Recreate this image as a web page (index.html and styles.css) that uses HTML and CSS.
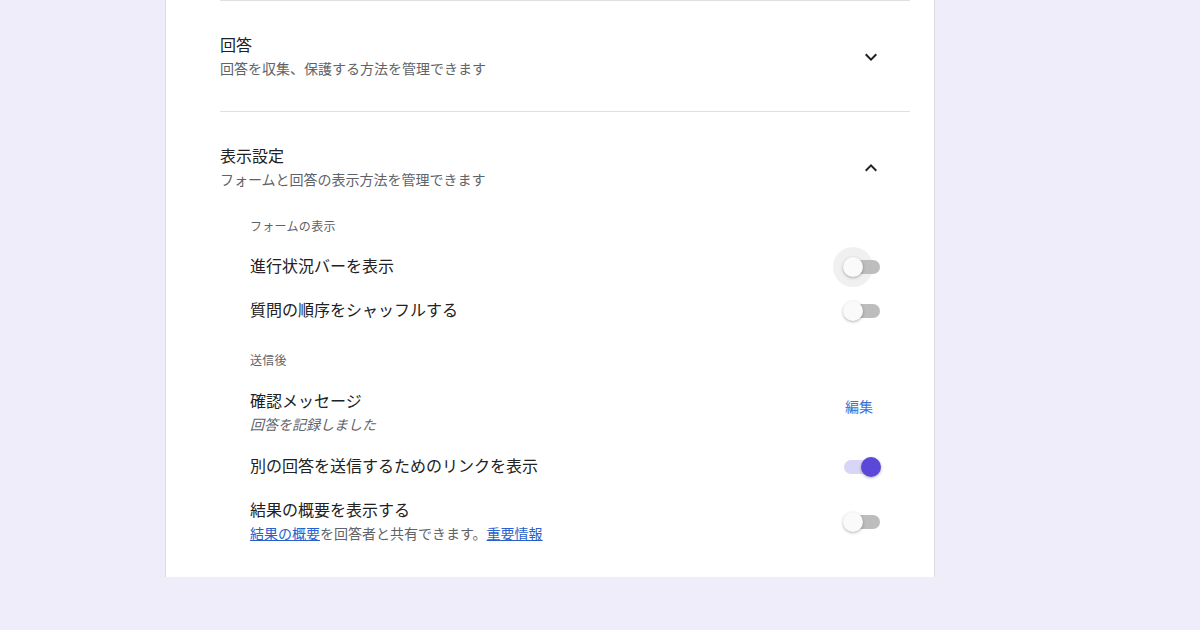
FILE: index.html
```html
<!DOCTYPE html>
<html lang="ja">
<head>
  <meta charset="utf-8">
  <link rel="stylesheet" href="styles.css">
</head>
<body>
  <div class="settings-card">
    <section class="settings-section">
      <div class="section-header">
        <div class="section-text">
          <div class="section-title">回答</div>
          <div class="section-desc">回答を収集、保護する方法を管理できます</div>
        </div>
        <button class="expand-button" aria-label="展開">
          <svg width="24" height="24" viewBox="0 0 24 24" fill="currentColor">
            <path d="M16.59 8.59L12 13.17 7.41 8.59 6 10l6 6 6-6z"></path>
          </svg>
        </button>
      </div>
    </section>

    <section class="settings-section open">
      <div class="section-header">
        <div class="section-text">
          <div class="section-title">表示設定</div>
          <div class="section-desc">フォームと回答の表示方法を管理できます</div>
        </div>
        <button class="expand-button" aria-label="折りたたむ">
          <svg width="24" height="24" viewBox="0 0 24 24" fill="currentColor">
            <path d="M12 8l-6 6 1.41 1.41L12 10.83l4.59 4.58L18 14z"></path>
          </svg>
        </button>
      </div>

      <div class="sub-group">
        <div class="group-label">フォームの表示</div>
        <div class="setting-row">
          <div class="row-title">進行状況バーを表示</div>
          <div class="toggle hovered"><span class="halo"></span><span class="track"></span><span class="knob"></span></div>
        </div>
        <div class="setting-row">
          <div class="row-title">質問の順序をシャッフルする</div>
          <div class="toggle"><span class="track"></span><span class="knob"></span></div>
        </div>
      </div>

      <div class="sub-group">
        <div class="group-label">送信後</div>
        <div class="setting-row">
          <div class="row-text">
            <div class="row-title">確認メッセージ</div>
            <div class="row-desc italic">回答を記録しました</div>
          </div>
          <button class="text-button">編集</button>
        </div>
        <div class="setting-row">
          <div class="row-title">別の回答を送信するためのリンクを表示</div>
          <div class="toggle on"><span class="track"></span><span class="knob"></span></div>
        </div>
        <div class="setting-row">
          <div class="row-text">
            <div class="row-title">結果の概要を表示する</div>
            <div class="row-desc"><a href="#">結果の概要</a>を回答者と共有できます。<a href="#">重要情報</a></div>
          </div>
          <div class="toggle"><span class="track"></span><span class="knob"></span></div>
        </div>
      </div>
    </section>
  </div>
</body>
</html>
```

FILE: styles.css
```css
body {
  margin: 0;
  background-color: #efedfa;
  font-family: Roboto, "Noto Sans CJK JP", sans-serif;
  color: #202124;
}

.settings-card {
  box-sizing: border-box;
  width: 770px;
  margin-left: 165px;
  padding: 0 24px 23px 54px;
  background-color: #fff;
  border-left: 1px solid #dadce0;
  border-right: 1px solid #dadce0;
}

.settings-section {
  border-top: 1px solid #e0e0e0;
  padding: 33px 0 32px;
}

.settings-section.open {
  padding-bottom: 0;
}

.section-header {
  display: flex;
  align-items: center;
  justify-content: space-between;
}

.section-title {
  font-size: 16px;
  line-height: 24px;
}

.section-desc {
  font-size: 14px;
  line-height: 20px;
  margin-top: 1px;
  color: #5f6368;
}

.expand-button {
  width: 40px;
  height: 40px;
  margin-right: 19px;
  padding: 0;
  border: none;
  background: none;
  color: #202124;
  display: flex;
  align-items: center;
  justify-content: center;
  cursor: pointer;
}

.sub-group {
  padding: 0 29px 0 30px;
}

.section-header + .sub-group {
  margin-top: 29px;
}

.sub-group + .sub-group {
  margin-top: 20px;
}

.group-label {
  font-size: 12px;
  line-height: 16px;
  letter-spacing: 0.3px;
  color: #5f6368;
  margin-bottom: 10px;
}

.setting-row {
  display: flex;
  align-items: center;
  justify-content: space-between;
  padding: 10px 0;
}

.row-title {
  font-size: 16px;
  line-height: 24px;
}

.row-desc {
  font-size: 14px;
  line-height: 20px;
  margin-top: 1px;
  color: #5f6368;
}

.row-desc.italic {
  font-style: italic;
}

.row-desc a {
  color: #2a5fcc;
  text-decoration: underline;
}

.text-button {
  border: none;
  background: none;
  font-family: inherit;
  font-size: 14px;
  line-height: 20px;
  color: #3c6fd6;
  padding: 8px;
  margin-bottom: 10px;
  cursor: pointer;
}

.toggle {
  position: relative;
  width: 38px;
  height: 20px;
  flex-shrink: 0;
}

.toggle .halo {
  position: absolute;
  top: -10px;
  left: -10px;
  width: 40px;
  height: 40px;
  border-radius: 50%;
  background-color: rgba(0,0,0,0.06);
}

.toggle .track {
  position: absolute;
  top: 3px;
  left: 1px;
  width: 36px;
  height: 14px;
  border-radius: 7px;
  background-color: #bdbdbd;
}

.toggle .knob {
  position: absolute;
  top: 0;
  left: 0;
  width: 20px;
  height: 20px;
  border-radius: 50%;
  background-color: #fafafa;
  box-shadow: 0 1px 3px rgba(0,0,0,0.3);
}

.toggle.on .track {
  background-color: #d9d5f6;
}

.toggle.on .knob {
  left: 18px;
  background-color: #5b47d8;
}
```
